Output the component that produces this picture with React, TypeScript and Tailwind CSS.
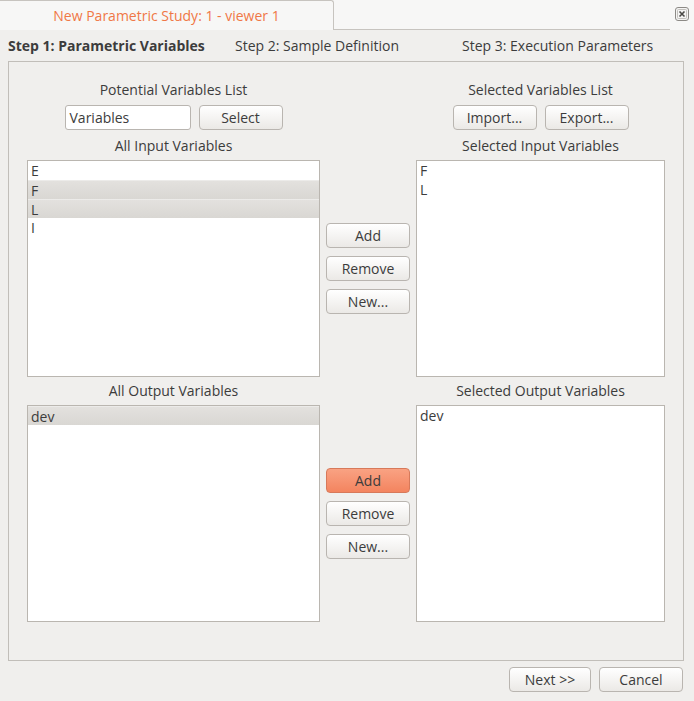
import React from 'react';

const Btn: React.FC<{ label: string; hot?: boolean; w?: string }> = ({ label, hot, w = 'w-[84px]' }) => (
  <button
    className={
      hot
        ? `${w} h-[25px] rounded-[4px] border border-[#d7795a] bg-linear-to-b from-[#f9a283] to-[#f3845f] text-[14px] text-[#3c3c3c]`
        : `${w} h-[25px] rounded-[4px] border border-[#b9b5b0] bg-linear-to-b from-white to-[#ebe9e6] text-[14px] text-[#3c3c3c]`
    }
  >
    {label}
  </button>
);

const ListBox: React.FC<{ items: { name: string; sel?: boolean }[]; w: string }> = ({ items, w }) => (
  <div className={`${w} h-[217px] border border-[#bab6b0] bg-white`}>
    {items.map(it => (
      <div
        key={it.name}
        className={
          it.sel
            ? 'h-[19px] pl-[3px] leading-[19px] bg-linear-to-b from-[#e3e1de] to-[#d9d7d3] border-t border-[#ecebe9]'
            : 'h-[19px] pl-[3px] leading-[19px]'
        }
      >
        {it.name}
      </div>
    ))}
  </div>
);

const Label: React.FC<{ text: string }> = ({ text }) => (
  <div className="h-[20px] leading-[20px] text-center">{text}</div>
);

const MidButtons: React.FC<{ hot?: boolean }> = ({ hot }) => (
  <div className="w-[84px] flex flex-col justify-center gap-[8px]">
    <Btn label="Add" hot={hot} />
    <Btn label="Remove" />
    <Btn label="New..." />
  </div>
);

export default function App() {
  return (
    <div className="w-[694px] h-[701px] bg-[#f0efed] text-[14px] text-[#3c3c3c] font-['Open_Sans',sans-serif] flex flex-col">
      <div className="h-[30px] flex bg-[#f7f7f6]">
        <div className="w-[334px] h-[30px] border-t border-r border-[#c7c4bf] rounded-tr-[3px] bg-[#f7f7f6] flex items-center justify-center text-[#f07746]">
          New Parametric Study: 1 - viewer 1
        </div>
        <div className="flex-1 border-b border-[#c7c4bf] h-[30px]" />
        <div className="w-[24px] flex justify-center pt-[7px] bg-[#f7f7f6]">
          <svg width="14" height="14" viewBox="0 0 14 14">
            <rect x="0.5" y="0.5" width="13" height="13" rx="2.5" fill="#f4f4f3" stroke="#8c8a86" />
            <rect x="2.5" y="2.5" width="9" height="9" rx="1" fill="none" stroke="#c3c1bd" />
            <path d="M4.5 4.5 L9.5 9.5 M9.5 4.5 L4.5 9.5" stroke="#4a4946" strokeWidth="1.6" />
          </svg>
        </div>
      </div>

      <div className="h-[31px] grid grid-cols-[227px_227px_227px] pl-[8px] items-center">
        <div className="font-bold">Step 1: Parametric Variables</div>
        <div>Step 2: Sample Definition</div>
        <div>Step 3: Execution Parameters</div>
      </div>

      <div className="ml-[8px] w-[676px] h-[600px] border border-[#c1beb9] pl-[18px] pt-[18px]">
        <div className="flex gap-[6px]">
          <div className="w-[293px] flex flex-col items-center">
            <Label text="Potential Variables List" />
            <div className="mt-[5px] flex gap-[8px]">
              <div className="w-[126px] h-[25px] border border-[#b9b5b0] rounded-[3px] bg-white pl-[4px] leading-[23px]">
                Variables
              </div>
              <Btn label="Select" />
            </div>
          </div>
          <div className="w-[84px]" />
          <div className="w-[249px] flex flex-col items-center">
            <Label text="Selected Variables List" />
            <div className="mt-[5px] flex gap-[8px]">
              <Btn label="Import..." />
              <Btn label="Export..." />
            </div>
          </div>
        </div>

        <div className="mt-[6px] flex gap-[6px]">
          <div className="w-[293px]"><Label text="All Input Variables" /></div>
          <div className="w-[84px]" />
          <div className="w-[249px]"><Label text="Selected Input Variables" /></div>
        </div>
        <div className="mt-[4px] flex gap-[6px]">
          <ListBox
            w="w-[293px]"
            items={[{ name: 'E' }, { name: 'F', sel: true }, { name: 'L', sel: true }, { name: 'I' }]}
          />
          <MidButtons />
          <ListBox w="w-[249px]" items={[{ name: 'F' }, { name: 'L' }]} />
        </div>

        <div className="mt-[4px] flex gap-[6px]">
          <div className="w-[293px]"><Label text="All Output Variables" /></div>
          <div className="w-[84px]" />
          <div className="w-[249px]"><Label text="Selected Output Variables" /></div>
        </div>
        <div className="mt-[4px] flex gap-[6px]">
          <ListBox w="w-[293px]" items={[{ name: 'dev', sel: true }]} />
          <MidButtons hot />
          <ListBox w="w-[249px]" items={[{ name: 'dev' }]} />
        </div>
      </div>

      <div className="mt-[6px] flex justify-end gap-[8px] pr-[11px]">
        <Btn label="Next >>" w="w-[82px]" />
        <Btn label="Cancel" />
      </div>
    </div>
  );
}
